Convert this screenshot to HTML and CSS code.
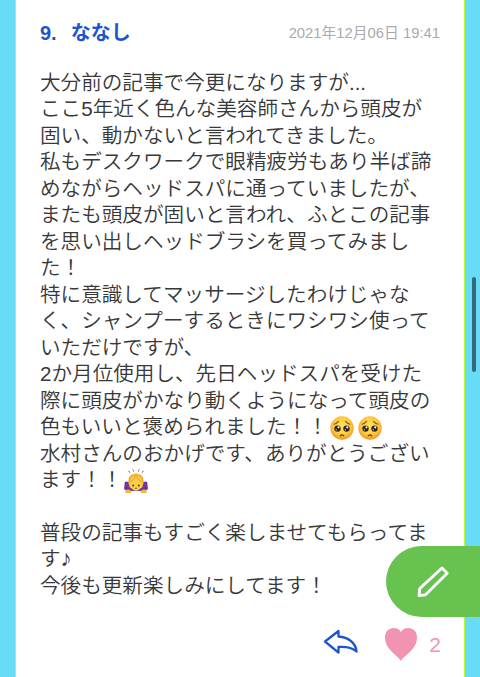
FILE: index.html
```
<!DOCTYPE html>
<html lang="ja">
<head>
    <meta charset="UTF-8">
    <title>コメント</title>
    <link rel="stylesheet" href="styles.css">
</head>
<body>
<svg class="defs">
    <defs>
        <radialGradient id="skin" cx="50%" cy="42%" r="58%">
            <stop offset="0" stop-color="#ffe75c"/>
            <stop offset="0.65" stop-color="#fdc93c"/>
            <stop offset="1" stop-color="#ee9526"/>
        </radialGradient>
        <symbol id="pleading" viewBox="0 0 24 24">
            <circle cx="12" cy="12" r="11.7" fill="url(#skin)"/>
            <path d="M4 8.2Q6.6 7.7 8.4 5.3M20 8.2Q17.4 7.7 15.6 5.3" fill="none" stroke="#8a501c" stroke-width="1.1" stroke-linecap="round"/>
            <circle cx="7.5" cy="12.6" r="3.2" fill="#38231b"/>
            <circle cx="16.5" cy="12.6" r="3.2" fill="#38231b"/>
            <circle cx="8.5" cy="11.3" r="1.1" fill="#fff"/>
            <circle cx="17.3" cy="11.3" r="1.1" fill="#fff"/>
            <circle cx="6.3" cy="13.7" r=".7" fill="#c9b9a9"/>
            <circle cx="15.3" cy="13.7" r=".7" fill="#c9b9a9"/>
            <path d="M10.3 19.8Q12 18.2 13.7 19.8" fill="none" stroke="#7b3f17" stroke-width="1.3" stroke-linecap="round"/>
        </symbol>
    </defs>
</svg>
<div class="comment">
    <div class="comment-header">
        <div class="name"><span class="number">9.</span>ななし</div>
        <div class="date">2021年12月06日 19:41</div>
    </div>
    <div class="comment-body">
        大分前の記事で今更になりますが<span class="dots">...</span><br>
        ここ5年近く色んな美容師さんから頭皮が<br>
        固い、動かないと言われてきました。<br>
        私もデスクワークで眼精疲労もあり半ば諦<br>
        めながらヘッドスパに通っていましたが、<br>
        またも頭皮が固いと言われ、ふとこの記事<br>
        を思い出しヘッドブラシを買ってみまし<br>
        た！<br>
        特に意識してマッサージしたわけじゃな<br>
        く、シャンプーするときにワシワシ使って<br>
        いただけですが、<br>
        2か月位使用し、先日ヘッドスパを受けた<br>
        際に頭皮がかなり動くようになって頭皮の<br>
        色もいいと褒められました！！<svg class="emoji"><use href="#pleading"/></svg><svg class="emoji"><use href="#pleading"/></svg><br>
        水村さんのおかげです、ありがとうござい<br>
        ます！！<svg class="emoji" viewBox="0 0 24 24">
            <path d="M4 2.2l2 .6-.6 1.6M8 .6l1.8.4-.4 2M16 .6l-1.8.4.4 2M20 2.2l-2 .6.6 1.6" stroke="#999" stroke-width=".9" fill="none"/>
            <path d="M.8 13Q3 11.5 6 14H18Q21 11.5 23.2 13L24 20 21 22H3L0 20z" fill="#6f35a0"/>
            <path d="M4.6 15C3 8.5 7 4.5 12 4.5S21 8.5 19.4 15L18 19H6z" fill="#eeb32c"/>
            <path d="M12 5C7.5 7 5.5 11 5.8 16Q7.5 21.5 12 21.8 16.5 21.5 18.2 16C18.5 11 16.5 7 12 5z" fill="#fdd04a"/>
            <path d="M12 5.5Q10.5 11 5.8 13.5M12 5.5Q13.5 11 18.2 13.5" stroke="#dd9d28" stroke-width="1" fill="none"/>
            <circle cx="9.2" cy="16.4" r="1" fill="#5b3516"/>
            <circle cx="14.8" cy="16.4" r="1" fill="#5b3516"/>
            <path d="M10.8 19.2h2.4" stroke="#8a501c" stroke-width="1" fill="none"/>
            <path d="M1 22Q4 19 7.5 22L7 24H1.6zM23 22Q20 19 16.5 22L17 24H22.4z" fill="#f5bd36"/>
        </svg><br>
        <br>
        普段の記事もすごく楽しませてもらってま<br>
        す<span class="note">♪</span><br>
        今後も更新楽しみにしてます！
    </div>
    <div class="comment-footer">
        <svg class="reply" viewBox="0 0 36 26">
            <path d="M2 12.5L15.5 2V7.5C25 8 33 14 33.5 22.5C29 18.5 23 17.5 15.5 18V23.7z"/>
        </svg>
        <svg class="heart" viewBox="0 0 32 33">
            <path d="M16 33C13 27 0 22 0 9.5C0 3.5 3.8 0 8.5 0C12 0 14.8 1.5 16 4C17.2 1.5 20 0 23.5 0C28.2 0 32 3.5 32 9.5C32 22 19 27 16 33z"/>
        </svg>
        <span class="like-count">2</span>
    </div>
</div>
<div class="write-btn">
    <svg class="pencil" viewBox="0 0 32 32">
        <path d="M2 29.5L2.7 22.6 25 2 30.2 7.3 8.5 28.8z"/>
    </svg>
</div>
<div class="scrollbar"></div>
</body>
</html>
```
FILE: styles.css
```
* { box-sizing: border-box; }
body { margin: 0; height: 677px; padding: 0 15px; background: #68dcf6; overflow: hidden; font-family: "Liberation Sans", "Noto Sans CJK JP", sans-serif; color: #383838; }
.defs { position: absolute; width: 0; height: 0; }
.comment { height: 677px; padding: 17px 23px 0 24px; background: #fff; border: solid #b4fa32; border-width: 0 1px; }
.comment-header { display: flex; justify-content: space-between; align-items: center; height: 28px; padding-right: 1px; white-space: nowrap; }
.name { font-size: 20px; font-weight: bold; color: #1d54d0; }
.number { margin-right: 14px; }
.date { font-size: 14.8px; color: #aaa; }
.comment-body { margin-top: 25px; font-size: 20.6px; line-height: 26.47px; font-weight: 350; white-space: nowrap; }
.emoji { width: 24px; height: 24px; margin: -4px 2px; vertical-align: -2px; }
.note { font-family: "DejaVu Sans", sans-serif; font-size: 23px; line-height: 1; }
.comment-footer { display: flex; align-items: center; justify-content: flex-end; height: 34px; margin-top: 28px; }
.reply { width: 36px; height: 26px; margin-right: 26px; margin-bottom: 4px; fill: none; stroke: #1d54d0; stroke-width: 2.3; stroke-linejoin: round; }
.heart { width: 32px; height: 33px; margin-right: 12px; fill: #f194b1; }
.like-count { margin-top: 2px; font-size: 21px; color: #f194b1; }
.write-btn { position: fixed; right: 0; top: 546px; display: flex; align-items: center; width: 94px; height: 71px; padding-left: 31px; background: #68c250; border-radius: 36px 0 0 36px; }
.pencil { width: 32px; height: 32px; fill: none; stroke: #fff; stroke-width: 2.8; stroke-linejoin: round; }
.scrollbar { position: fixed; right: 4px; top: 277px; width: 4px; height: 95px; border-radius: 2px; background: #316b79; }
```
